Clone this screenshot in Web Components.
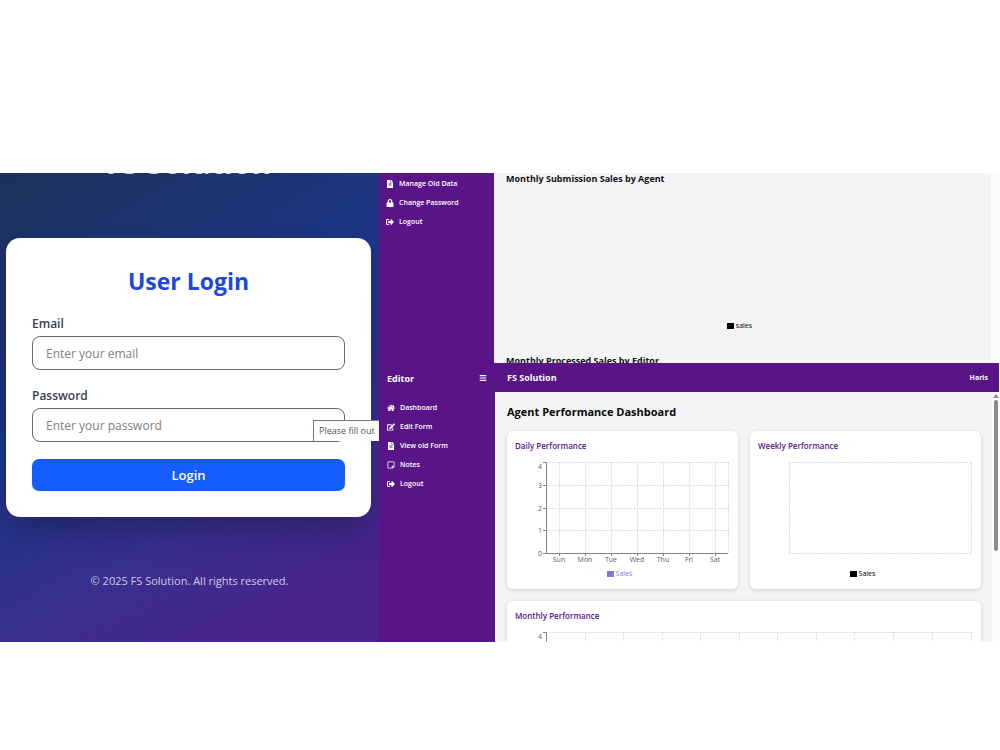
<!DOCTYPE html>
<html lang="en">
<head>
<meta charset="utf-8">
<meta name="viewport" content="width=device-width, initial-scale=1">
<title>FS Solution</title>
<style>
  body { margin: 0; background: #fff; font-family: "Open Sans", "Noto Sans", sans-serif; }
</style>
</head>
<body>
<fs-showcase>
  <fs-login slot="login"></fs-login>
  <fs-admin slot="admin"></fs-admin>
  <fs-editor slot="editor"></fs-editor>
</fs-showcase>

<script>
class Base extends HTMLElement {
  connectedCallback() {
    if (this.shadowRoot) return;
    this.attachShadow({ mode: 'open' }).innerHTML = this.render();
  }
}

const ICONS = {
  file: ['0 0 384 512', 'M224 136V0H24C10.7 0 0 10.7 0 24v464c0 13.3 10.7 24 24 24h336c13.3 0 24-10.7 24-24V160H248c-13.2 0-24-10.8-24-24zm64 236c0 6.6-5.4 12-12 12H108c-6.6 0-12-5.4-12-12v-8c0-6.6 5.4-12 12-12h168c6.6 0 12 5.4 12 12v8zm0-64c0 6.6-5.4 12-12 12H108c-6.6 0-12-5.4-12-12v-8c0-6.6 5.4-12 12-12h168c6.6 0 12 5.4 12 12v8zm0-72v8c0 6.6-5.4 12-12 12H108c-6.6 0-12-5.4-12-12v-8c0-6.6 5.4-12 12-12h168c6.6 0 12 5.4 12 12zm96-114.1v6.1H256V0h6.1c6.4 0 12.5 2.5 17 7l97.9 98c4.5 4.5 7 10.6 7 16.9z'],
  lock: ['0 0 448 512', 'M400 224h-24v-72C376 68.2 307.8 0 224 0S72 68.2 72 152v72H48c-26.5 0-48 21.5-48 48v192c0 26.5 21.5 48 48 48h352c26.5 0 48-21.5 48-48V272c0-26.5-21.5-48-48-48zm-104 0H152v-72c0-39.7 32.3-72 72-72s72 32.3 72 72v72z'],
  logout: ['0 0 512 512', 'M497 273L329 441c-15 15-41 4.5-41-17v-96H152c-13.3 0-24-10.7-24-24v-96c0-13.3 10.7-24 24-24h136V88c0-21.4 25.9-32 41-17l168 168c9.3 9.4 9.3 24.6 0 34zM192 436v-40c0-6.6-5.4-12-12-12H96c-17.7 0-32-14.3-32-32V160c0-17.7 14.3-32 32-32h84c6.6 0 12-5.4 12-12V76c0-6.6-5.4-12-12-12H96c-53 0-96 43-96 96v192c0 53 43 96 96 96h84c6.6 0 12-5.4 12-12z'],
  home: ['0 0 576 512', 'M280.37 148.26L96 300.11V464a16 16 0 0 0 16 16l112.06-.29a16 16 0 0 0 15.92-16V368a16 16 0 0 1 16-16h64a16 16 0 0 1 16 16v95.64a16 16 0 0 0 16 16.05L464 480a16 16 0 0 0 16-16V300L295.67 148.26a12.19 12.19 0 0 0-15.3 0zM571.6 251.47L488 182.56V44.05a12 12 0 0 0-12-12h-56a12 12 0 0 0-12 12v72.61L318.47 43a48 48 0 0 0-61 0L4.34 251.47a12 12 0 0 0-1.6 16.9l25.5 31A12 12 0 0 0 45.15 301l235.22-193.74a12.19 12.19 0 0 1 15.3 0L530.9 301a12 12 0 0 0 16.9-1.6l25.5-31a12 12 0 0 0-1.7-16.93z'],
  edit: ['0 0 576 512', 'M402.6 83.2l90.2 90.2c3.8 3.8 3.8 10 0 13.8L274.4 405.6l-92.8 10.3c-12.4 1.4-22.9-9.1-21.5-21.5l10.3-92.8L388.8 83.2c3.8-3.8 10-3.8 13.8 0zm162-22.9l-48.8-48.8c-15.2-15.2-39.9-15.2-55.2 0l-35.4 35.4c-3.8 3.8-3.8 10 0 13.8l90.2 90.2c3.8 3.8 10 3.8 13.8 0l35.4-35.4c15.2-15.3 15.2-40 0-55.2zM384 346.2V448H64V128h229.8c3.2 0 6.2-1.3 8.5-3.5l40-40c7.6-7.6 2.2-20.5-8.5-20.5H48C21.5 64 0 85.5 0 112v352c0 26.5 21.5 48 48 48h352c26.5 0 48-21.5 48-48V306.2c0-10.7-12.9-16-20.5-8.5l-40 40c-2.2 2.3-3.5 5.3-3.5 8.5z'],
  note: ['0 0 448 512', 'M448 348.106V80c0-26.51-21.49-48-48-48H48C21.49 32 0 53.49 0 80v351.988c0 26.51 21.49 48 48 48h268.118a48 48 0 0 0 33.941-14.059l83.882-83.882A48 48 0 0 0 448 348.106zm-128 80v-76.118h76.118L320 428.106zM400 80v223.988H296c-13.255 0-24 10.745-24 24v104H48V80h352z'],
  bars: ['0 0 448 512', 'M16 70h416v68H16zM16 222h416v68H16zM16 374h416v68H16z']
};

customElements.define('fs-icon', class extends Base {
  render() {
    const [box, d] = ICONS[this.getAttribute('name')];
    return `<style>
      :host { display: block; width: 8px; height: 8px; }
      svg { display: block; width: 100%; height: 100%; }
    </style><svg viewBox="${box}" fill="currentColor" aria-hidden="true"><path d="${d}"/></svg>`;
  }
});

customElements.define('fs-showcase', class extends Base {
  render() {
    return `<style>
      :host { display: grid; grid-template-columns: minmax(0, 379fr) minmax(0, 621fr); padding: 173px 0 108px; }
      .stack { display: flex; flex-direction: column; padding-right: 1px; }
    </style>
    <slot name="login"></slot>
    <div class="stack"><slot name="admin"></slot><slot name="editor"></slot></div>`;
  }
});

customElements.define('fs-login', class extends Base {
  render() {
    return `<style>
      :host { display: block; position: relative; overflow: hidden; text-align: center;
        background: linear-gradient(150deg, #1d3259 0%, #1c3689 42%, #39308e 68%, #4a238c 90%); }
      h1 { margin: -26px 0 59px; padding-right: 2px; font-size: 30px; line-height: 32px; color: #d9d6c8; }
      form { margin: 0 8px 0 6px; padding: 26px; border-radius: 14px; background: #fff;
        box-shadow: 0 16px 32px -4px rgba(20, 20, 50, .45); }
      h2 { margin: 0 0 18px; font-size: 23px; line-height: 34px; color: #1d47dc; }
      label { display: block; margin-bottom: 4px; text-align: left; font-size: 12px; line-height: 16px; font-weight: 600; color: #364153; }
      input { display: block; box-sizing: border-box; width: 100%; height: 34px; margin: 0 0 18px; padding: 0 13px;
        border: 1px solid #666; border-radius: 8px; background: #fff; font: 12px/16px "Open Sans", sans-serif; color: #333; }
      input::placeholder { color: #808080; opacity: 1; }
      button { display: block; width: 100%; height: 32px; margin-top: -1px; padding: 0; border: 0; border-radius: 7px;
        background: #155dfc; color: #fff; font: 600 13px/18px "Open Sans", sans-serif; }
      .tip { position: absolute; right: 0; top: 247px; box-sizing: border-box; height: 21px; width: 66px; padding-left: 5px;
        white-space: nowrap; text-align: left; border: solid #777; border-width: 1px 0 0 1px; background: #fff;
        color: #555; font-size: 9px; line-height: 20px; }
      footer { margin: 56px 0 53px; font-size: 11px; line-height: 16px; color: #cfc9e6; }
    </style>
    <h1>FS Solution</h1>
    <form>
      <h2>User Login</h2>
      <label for="email">Email</label>
      <input id="email" type="email" placeholder="Enter your email">
      <label for="password">Password</label>
      <input id="password" type="password" placeholder="Enter your password">
      <button type="button">Login</button>
    </form>
    <div class="tip" role="tooltip">Please fill out</div>
    <footer>© 2025 FS Solution. All rights reserved.</footer>`;
  }
});

customElements.define('fs-nav-item', class extends Base {
  render() {
    return `<style>
      :host { display: block; }
      a { display: flex; align-items: center; gap: 5px; color: #fff; text-decoration: none; font-size: 7px; line-height: 15px; font-weight: 600; white-space: nowrap; }
    </style><a href="#"><fs-icon name="${this.getAttribute('icon')}"></fs-icon><slot></slot></a>`;
  }
});

customElements.define('fs-legend', class extends Base {
  render() {
    return `<style>
      :host { display: flex; align-items: center; justify-content: center; gap: 2px; padding-right: 6px; font-size: 7px; line-height: 14px; font-weight: 500; color: #000; }
      i { width: 7px; height: 6px; background: currentColor; }
    </style><i></i><slot></slot>`;
  }
});

customElements.define('fs-scrollbar', class extends Base {
  render() {
    return `<style>
      :host { display: flex; flex-direction: column; align-items: center; background: #fcfcfc; color: #8b8b8b; }
      svg { display: block; width: 6px; height: 4px; fill: currentColor; }
      .up { margin: 2px 0; }
      .thumb { width: 4px; height: 151px; border-radius: 2px; background: currentColor; }
      .down { margin-top: auto; }
    </style>` + (this.hasAttribute('thumb')
      ? '<svg class="up" viewBox="0 0 6 4"><path d="M3 0 6 4H0z"/></svg><div class="thumb"></div>'
      : '<svg class="down" viewBox="0 0 6 4"><path d="M0 0H6L3 4z"/></svg>');
  }
});

customElements.define('fs-admin', class extends Base {
  render() {
    return `<style>
      :host { display: grid; grid-template-columns: 115px minmax(0, 1fr) 8px; height: 190px; overflow: hidden; }
      nav { display: flex; flex-direction: column; gap: 4px; padding: 3px 7px; background: #591588; }
      main { padding: 0 12px; background: #f3f4f6; }
      h2 { margin: 0; font-size: 9px; line-height: 12px; color: #111; }
      .chart { display: flex; flex-direction: column; justify-content: flex-end; box-sizing: border-box; height: 170px; padding-bottom: 22px; }
    </style>
    <nav>
      <fs-nav-item icon="file">Manage Old Data</fs-nav-item>
      <fs-nav-item icon="lock">Change Password</fs-nav-item>
      <fs-nav-item icon="logout">Logout</fs-nav-item>
    </nav>
    <main>
      <h2>Monthly Submission Sales by Agent</h2>
      <div class="chart"><fs-legend>sales</fs-legend></div>
      <h2>Monthly Processed Sales by Editor</h2>
    </main>
    <fs-scrollbar></fs-scrollbar>`;
  }
});

/* Line chart frame: dashed grid, optional axes with ticks and labels. */
customElements.define('fs-chart', class extends Base {
  render() {
    const w = +this.getAttribute('width'), x0 = 31, x1 = w - 2, y0 = 9, y1 = 100;
    const xs = (this.getAttribute('grid') || '').split(',').filter(Boolean).map(Number);
    const labels = (this.getAttribute('labels') || '').split(',').filter(Boolean);
    const axes = this.hasAttribute('axes');
    const shown = (this.getAttribute('values') || '0,1,2,3,4').split(',').map(Number);
    const ys = axes ? [0, 1, 2, 3, 4].map(i => Math.round(y1 - i * (y1 - y0) / 4)) : [y0, y1];
    let g = '', t = '', a = '';
    for (const y of ys) g += `M${x0} ${y + .5}H${x1}`;
    for (const x of [x0, ...xs, x1]) g += `M${x + .5} ${y0}V${y1}`;
    if (axes) {
      a = `M${x0 + .5} ${y0}V${y1 + .5}H${x1}`;
      ys.forEach((y, i) => {
        a += `M${x0 - 3} ${y + .5}h3`;
        if (shown.includes(i)) t += `<text x="${x0 - 4}" y="${i === 4 ? y + 7 : y + 3}" text-anchor="end">${i}</text>`;
      });
      labels.forEach((l, i) => {
        a += `M${xs[i] + .5} ${y1}v3`;
        t += `<text x="${xs[i]}" y="${y1 + 9}" text-anchor="middle">${l}</text>`;
      });
    }
    return `<style>
      :host { display: block; }
      svg { display: block; width: 100%; height: auto; }
      text { font-size: 7px; font-weight: 500; fill: #5c5c5c; }
    </style><svg viewBox="0 0 ${w} 114"><path d="${g}" stroke="#dedede" stroke-dasharray="2 1" fill="none"/><path d="${a}" stroke="#858585" fill="none"/>${t}</svg>`;
  }
});

customElements.define('fs-card', class extends Base {
  render() {
    return `<style>
      :host { display: block; padding: 8px; border-radius: 6px; background: #fff; box-shadow: 0 1px 4px rgba(0, 0, 0, .15); }
      h3 { margin: 0; font-size: 8px; line-height: 14px; font-weight: 600; color: #591588; }
    </style><h3>${this.getAttribute('heading')}</h3><slot></slot>`;
  }
});

customElements.define('fs-editor', class extends Base {
  render() {
    return `<style>
      :host { display: grid; grid-template-columns: 116px minmax(0, 1fr); height: 279px; overflow: hidden; }
      aside { background: #591588; padding: 0 8px; color: #fff; }
      .head, header { display: flex; align-items: center; justify-content: space-between; height: 30px; font-size: 9px; font-weight: 700; color: #fff; }
      header { height: 29px; }
      .head button { padding: 0; border: 0; background: none; color: inherit; }
      nav { display: flex; flex-direction: column; gap: 4px; padding-top: 7px; }
      header { padding: 0 11px 0 12px; background: #591588; }
      header span { font-size: 7px; font-weight: 700; }
      .body { display: grid; grid-template-columns: minmax(0, 1fr) 7px; height: 250px; overflow: hidden; }
      main { display: grid; grid-template-columns: repeat(2, minmax(0, 1fr)); gap: 12px; align-content: start; padding: 12px 11px 12px 12px; background: #f3f4f6; }
      h2 { grid-column: 1 / -1; margin: 0 0 -1px; font-size: 11px; line-height: 16px; color: #0a0a0a; }
      .wide { grid-column: 1 / -1; }
      .violet { color: #8078d4; }
    </style>
    <aside>
      <div class="head">Editor <button type="button" aria-label="Toggle menu"><fs-icon name="bars"></fs-icon></button></div>
      <nav>
        <fs-nav-item icon="home">Dashboard</fs-nav-item>
        <fs-nav-item icon="edit">Edit Form</fs-nav-item>
        <fs-nav-item icon="file">View old Form</fs-nav-item>
        <fs-nav-item icon="note">Notes</fs-nav-item>
        <fs-nav-item icon="logout">Logout</fs-nav-item>
      </nav>
    </aside>
    <div>
      <header>FS Solution <span>Haris</span></header>
      <div class="body">
        <main>
          <h2>Agent Performance Dashboard</h2>
          <fs-card heading="Daily Performance">
            <fs-chart width="215" axes grid="44,70,96,122,148,174,200" labels="Sun,Mon,Tue,Wed,Thu,Fri,Sat"></fs-chart>
            <fs-legend class="violet">Sales</fs-legend>
          </fs-card>
          <fs-card heading="Weekly Performance">
            <fs-chart width="215"></fs-chart>
            <fs-legend>Sales</fs-legend>
          </fs-card>
          <fs-card class="wide" heading="Monthly Performance">
            <fs-chart width="458" axes values="4" grid="70,108,147,185,224,262,301,339,378,417"></fs-chart>
          </fs-card>
        </main>
        <fs-scrollbar thumb></fs-scrollbar>
      </div>
    </div>`;
  }
});
</script>
</body>
</html>
